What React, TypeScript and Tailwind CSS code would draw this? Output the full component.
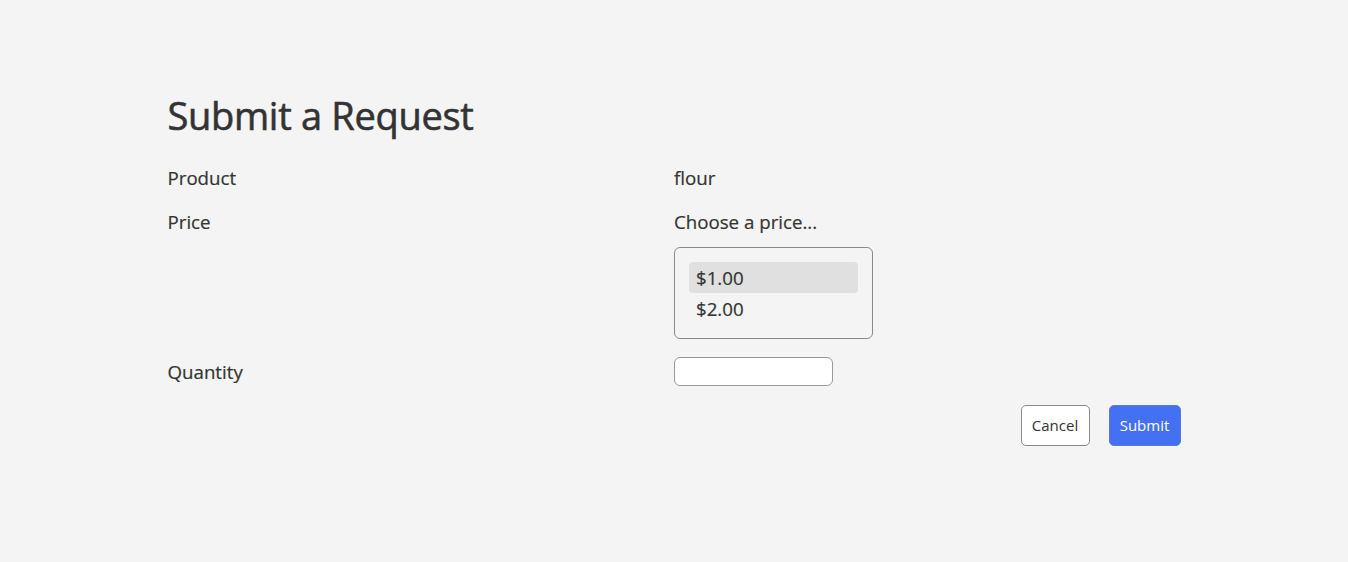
import React from "react";

const prices = ["$1.00", "$2.00"];

export default function App() {
  return (
    <div
      className="min-h-[562px] w-full bg-[#f4f4f4] text-[#333]"
      style={{ fontFamily: '"Open Sans", sans-serif' }}
    >
      <div className="mx-auto w-[1013px] pt-[88px]">
        <h1 className="text-[38px] leading-[54px] font-normal tracking-[-0.3px] [-webkit-text-stroke:0.6px_#333]">
          Submit a Request
        </h1>
        <div className="mt-[14px] grid grid-cols-2 text-[18.7px] leading-[28px] [-webkit-text-stroke:0.2px_#333]">
          <div className="py-[8px]">Product</div>
          <div className="py-[8px]">flour</div>

          <div className="py-[8px]">Price</div>
          <div className="py-[8px]">
            <div>Choose a price...</div>
            <div className="mt-[11px] w-[199px] rounded-[6px] border border-[#8a8a8a] p-[14px]">
              {prices.map((p, i) => (
                <div
                  key={p}
                  className={
                    "h-[31px] rounded-[4px] px-[7px] leading-[31px] " +
                    (i === 0 ? "bg-[#e0e0e0]" : "")
                  }
                >
                  {p}
                </div>
              ))}
            </div>
          </div>

          <div className="flex items-center pt-[8px] pb-[10px]">Quantity</div>
          <div className="pt-[10px] pb-[12px]">
            <input
              type="text"
              className="block h-[29px] w-[159px] rounded-[6px] border border-[#999] bg-white"
            />
          </div>
        </div>
        <div className="mt-[7px] flex justify-end gap-[19px] text-[15px]">
          <button className="h-[41px] w-[69px] rounded-[5px] border border-[#8a8a8a] bg-white text-[#333]">
            Cancel
          </button>
          <button className="h-[41px] w-[72px] rounded-[5px] border border-[#5a79e0] bg-[#4470f4] text-white">
            Submit
          </button>
        </div>
      </div>
    </div>
  );
}
